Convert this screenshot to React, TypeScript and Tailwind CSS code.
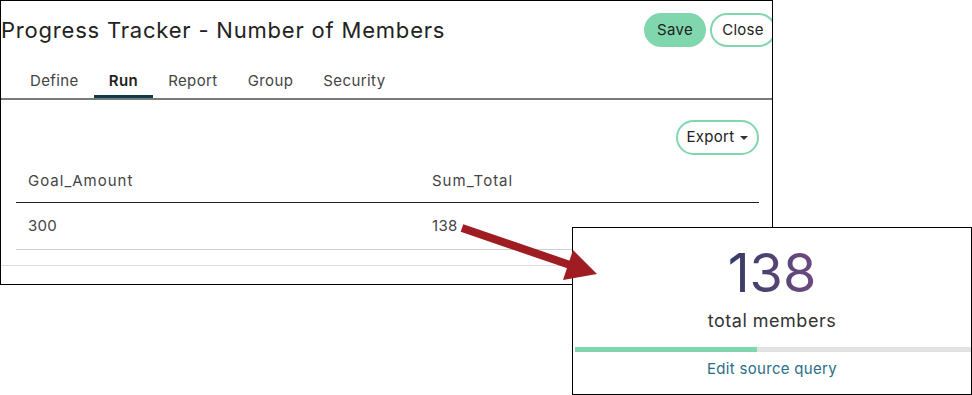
import React from "react";

const tabs = ["Define", "Run", "Report", "Group", "Security"];

function Arrow() {
  return (
    <svg
      className="absolute left-0 top-0 pointer-events-none"
      width={972}
      height={395}
      viewBox="0 0 972 395"
    >
      <line x1={462} y1={228} x2={570} y2={265} stroke="#9f1c23" strokeWidth={8} />
      <polygon points="597,274 573,250 563,280" fill="#9f1c23" />
    </svg>
  );
}

export default function App() {
  return (
    <div className="relative w-[972px] h-[395px] bg-white overflow-hidden font-['Inter',sans-serif] text-[#2b2b2b]">
      {/* query window */}
      <div className="w-[773px] h-[285px] border border-black overflow-hidden flex flex-col">
        <div className="h-[58px] flex items-center justify-between">
          <h1 className="text-[22px] leading-[28px] font-normal tracking-[0.8px] text-[#222]">
            Progress Tracker - Number of Members
          </h1>
          <div className="flex gap-[4px] -mr-[4px]">
            <button className="w-[62px] h-[34px] rounded-full bg-[#80d7ae] text-[15px] tracking-[0.3px] text-[#222]">
              Save
            </button>
            <button className="w-[66px] h-[34px] rounded-full border-2 border-[#80d7ae] text-[15px] tracking-[0.3px] text-[#222]">
              Close
            </button>
          </div>
        </div>
        <div className="h-[41px] flex pl-[14px] border-b-2 border-[#7a7a7a]">
          {tabs.map((t) => (
            <div
              key={t}
              className={`h-[39px] px-[15px] flex items-end pb-[4px] text-[15px] leading-[20px] tracking-[0.4px] border-b-[3px] ${
                t === "Run"
                  ? "border-[#0d3c4b] font-semibold text-[#222]"
                  : "border-transparent text-[#444]"
              }`}
            >
              {t}
            </div>
          ))}
        </div>
        <div className="pl-[15px] pr-[13px] pt-[20px] pb-[15px] border-b border-[#dcdcdc]">
          <div className="flex justify-end">
            <button className="w-[83px] h-[35px] rounded-full border-2 border-[#80d7ae] text-[15px] tracking-[0.3px] text-[#222] flex items-center justify-center gap-[6px]">
              Export
              <span className="w-0 h-0 border-l-[4px] border-r-[4px] border-t-[4px] border-l-transparent border-r-transparent border-t-[#333]" />
            </button>
          </div>
          <div className="text-[15px] leading-[20px] text-[#444]">
            <div className="grid grid-cols-[404px_1fr] border-b border-[#222] pt-[16px] pb-[11px] tracking-[1px]">
              <div className="pl-[12px]">Goal_Amount</div>
              <div className="pl-[12px]">Sum_Total</div>
            </div>
            <div className="grid grid-cols-[404px_1fr] border-b border-[#cfcfcf] pt-[13px] pb-[13px] tracking-[0.3px]">
              <div className="pl-[12px]">300</div>
              <div className="pl-[12px]">138</div>
            </div>
          </div>
        </div>
      </div>

      {/* widget card */}
      <div className="absolute left-[572px] top-[227px] w-[400px] h-[168px] border border-black bg-white flex flex-col">
        <div className="pt-[13px] text-center">
          <span className="text-[54px] leading-[64px] bg-gradient-to-r from-[#343b66] to-[#6f4a80] bg-clip-text text-transparent">
            138
          </span>
        </div>
        <div className="text-center text-[18px] leading-[24px] tracking-[0.5px] text-[#333] mt-[4px]">
          total members
        </div>
        <div className="mt-[14px] ml-[2px] h-[5px] bg-[#e2e2e2] flex">
          <div className="h-full bg-[#80d7ae]" style={{ width: `${(138 / 300) * 100}%` }} />
        </div>
        <div className="text-center text-[15px] leading-[20px] tracking-[0.3px] text-[#2a6e88] mt-[7px]">
          Edit source query
        </div>
      </div>

      <Arrow />
    </div>
  );
}
